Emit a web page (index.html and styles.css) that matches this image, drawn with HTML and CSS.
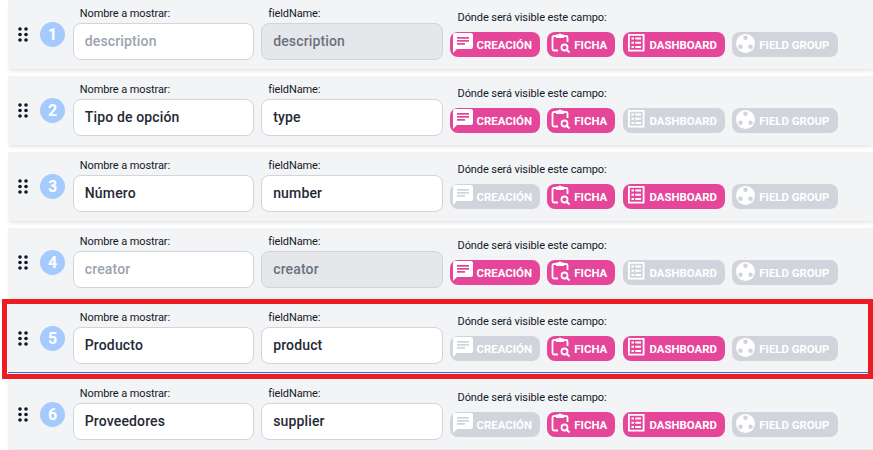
FILE: index.html
```html
<!DOCTYPE html>
<html lang="en">
<head>
  <meta charset="UTF-8">
  <title>Campos</title>
  <link rel="stylesheet" href="styles.css">
</head>
<body>
  <!-- icon sprites -->
  <svg class="sprites" width="0" height="0">
    <symbol id="i-drag" viewBox="0 0 10 15">
      <circle cx="2" cy="2" r="1.8"/><circle cx="8" cy="2" r="1.8"/>
      <circle cx="2" cy="7.5" r="1.8"/><circle cx="8" cy="7.5" r="1.8"/>
      <circle cx="2" cy="13" r="1.8"/><circle cx="8" cy="13" r="1.8"/>
    </symbol>
    <symbol id="i-chat" viewBox="0 0 24 24">
      <path fill="currentColor" d="M20 2H4a2 2 0 0 0-2 2v18l4-4h14a2 2 0 0 0 2-2V4c0-1.11-.9-2-2-2zM6 6h12v1.700H6V6zm0 3h12v1.700H6V9zm8 4.700H6V12h8v1.700z"/>
    </symbol>
    <symbol id="i-clip" viewBox="0 0 24 24">
      <path fill="none" stroke="currentColor" stroke-width="1.800" d="M8 5H6a1.500 1.500 0 0 0-1.500 1.500V18a1.500 1.500 0 0 0 1.500 1.500h4M16 5h2a1.500 1.500 0 0 1 1.500 1.500V11"/>
      <path fill="currentColor" d="M8 3.500h2.500a1.600 1.600 0 0 1 3 0H16V7H8z"/>
      <circle cx="16.500" cy="16.500" r="3" fill="none" stroke="currentColor" stroke-width="1.800"/>
      <path stroke="currentColor" stroke-width="2" d="M18.700 18.700l2.800 2.800"/>
    </symbol>
    <symbol id="i-table" viewBox="0 0 24 24">
      <path fill="currentColor" fill-rule="evenodd" d="M4 3h16.500v17.500H4zM5.800 4.800v13.900h12.900V4.800z"/>
      <path fill="currentColor" d="M7.500 6.500h2.500v2H7.500zM11.300 6.500h5.700v2h-5.700zM7.500 10.700h2.500v2H7.500zM11.300 10.700h5.700v2h-5.700zM7.500 14.900h2.500v2H7.500zM11.300 14.900h5.700v2h-5.700z"/>
    </symbol>
    <symbol id="i-group" viewBox="0 0 24 24">
      <path fill="currentColor" fill-rule="evenodd" d="M12.500 3a9.500 9.500 0 1 0 0 19 9.500 9.500 0 0 0 0-19zM12.500 4.500a2.300 2.300 0 1 1 0 4.600 2.300 2.300 0 0 1 0-4.600zM7.500 13.500a2.300 2.300 0 1 1 0 4.600 2.300 2.300 0 0 1 0-4.600zM17.500 13.500a2.300 2.300 0 1 1 0 4.600 2.300 2.300 0 0 1 0-4.600z"/>
    </symbol>
  </svg>

  <div class="list">
    <div class="row">
      <svg class="drag"><use href="#i-drag"/></svg>
      <span class="num">1</span>
      <div class="field"><label>Nombre a mostrar:</label><input type="text" placeholder="description"></div>
      <div class="field"><label>fieldName:</label><input type="text" value="description" disabled></div>
      <div class="where">
        <p>Dónde será visible este campo:</p>
        <div class="tags">
          <span class="tag on"><svg><use href="#i-chat"/></svg>Creación</span>
          <span class="tag on"><svg><use href="#i-clip"/></svg>Ficha</span>
          <span class="tag on"><svg><use href="#i-table"/></svg>Dashboard</span>
          <span class="tag"><svg><use href="#i-group"/></svg>Field group</span>
        </div>
      </div>
    </div>

    <div class="row">
      <svg class="drag"><use href="#i-drag"/></svg>
      <span class="num">2</span>
      <div class="field"><label>Nombre a mostrar:</label><input type="text" value="Tipo de opción"></div>
      <div class="field"><label>fieldName:</label><input type="text" value="type"></div>
      <div class="where">
        <p>Dónde será visible este campo:</p>
        <div class="tags">
          <span class="tag on"><svg><use href="#i-chat"/></svg>Creación</span>
          <span class="tag on"><svg><use href="#i-clip"/></svg>Ficha</span>
          <span class="tag"><svg><use href="#i-table"/></svg>Dashboard</span>
          <span class="tag"><svg><use href="#i-group"/></svg>Field group</span>
        </div>
      </div>
    </div>

    <div class="row">
      <svg class="drag"><use href="#i-drag"/></svg>
      <span class="num">3</span>
      <div class="field"><label>Nombre a mostrar:</label><input type="text" value="Número"></div>
      <div class="field"><label>fieldName:</label><input type="text" value="number"></div>
      <div class="where">
        <p>Dónde será visible este campo:</p>
        <div class="tags">
          <span class="tag"><svg><use href="#i-chat"/></svg>Creación</span>
          <span class="tag on"><svg><use href="#i-clip"/></svg>Ficha</span>
          <span class="tag on"><svg><use href="#i-table"/></svg>Dashboard</span>
          <span class="tag"><svg><use href="#i-group"/></svg>Field group</span>
        </div>
      </div>
    </div>

    <div class="row">
      <svg class="drag"><use href="#i-drag"/></svg>
      <span class="num">4</span>
      <div class="field"><label>Nombre a mostrar:</label><input type="text" placeholder="creator"></div>
      <div class="field"><label>fieldName:</label><input type="text" value="creator" disabled></div>
      <div class="where">
        <p>Dónde será visible este campo:</p>
        <div class="tags">
          <span class="tag on"><svg><use href="#i-chat"/></svg>Creación</span>
          <span class="tag on"><svg><use href="#i-clip"/></svg>Ficha</span>
          <span class="tag"><svg><use href="#i-table"/></svg>Dashboard</span>
          <span class="tag"><svg><use href="#i-group"/></svg>Field group</span>
        </div>
      </div>
    </div>

    <div class="row selected">
      <svg class="drag"><use href="#i-drag"/></svg>
      <span class="num">5</span>
      <div class="field"><label>Nombre a mostrar:</label><input type="text" value="Producto"></div>
      <div class="field"><label>fieldName:</label><input type="text" value="product"></div>
      <div class="where">
        <p>Dónde será visible este campo:</p>
        <div class="tags">
          <span class="tag"><svg><use href="#i-chat"/></svg>Creación</span>
          <span class="tag on"><svg><use href="#i-clip"/></svg>Ficha</span>
          <span class="tag on"><svg><use href="#i-table"/></svg>Dashboard</span>
          <span class="tag"><svg><use href="#i-group"/></svg>Field group</span>
        </div>
      </div>
      <div class="highlight"></div>
    </div>

    <div class="row">
      <svg class="drag"><use href="#i-drag"/></svg>
      <span class="num">6</span>
      <div class="field"><label>Nombre a mostrar:</label><input type="text" value="Proveedores"></div>
      <div class="field"><label>fieldName:</label><input type="text" value="supplier"></div>
      <div class="where">
        <p>Dónde será visible este campo:</p>
        <div class="tags">
          <span class="tag"><svg><use href="#i-chat"/></svg>Creación</span>
          <span class="tag on"><svg><use href="#i-clip"/></svg>Ficha</span>
          <span class="tag on"><svg><use href="#i-table"/></svg>Dashboard</span>
          <span class="tag"><svg><use href="#i-group"/></svg>Field group</span>
        </div>
      </div>
    </div>
  </div>
</body>
</html>
```

FILE: styles.css
```css
* {
  box-sizing: border-box;
}

html, body {
  height: 450px;
  overflow: hidden;
}

body {
  margin: 0;
  padding-left: 8px;
  background: #fff;
  font-family: Roboto, "Liberation Sans", sans-serif;
  color: #111827;
}

.sprites {
  position: absolute;
}

.list {
  display: flex;
  flex-direction: column;
  gap: 7px;
}

.row {
  position: relative;
  display: flex;
  height: 69px;
  padding: 6px 0 0 10px;
  background: #f3f4f6;
  box-shadow: 0 3px 3px -1px rgba(0, 0, 0, 0.1);
}

.row.selected {
  border-bottom: 1.5px solid #3b6fd8;
}

.highlight {
  position: absolute;
  top: -5px;
  left: -6px;
  width: 871px;
  height: 80px;
  border: 5px solid #eb1c24;
  pointer-events: none;
}

.drag {
  width: 10px;
  height: 15px;
  margin: 21px 12px 0 0;
  fill: #111827;
}

.num {
  width: 25px;
  height: 25px;
  margin: 16px 7.8px 0 0;
  border-radius: 50%;
  background: #a4cafe;
  color: #fff;
  font-size: 16px;
  font-weight: 700;
  line-height: 25px;
  text-align: center;
}

.field {
  display: flex;
  flex-direction: column;
  width: 181.4px;
  margin-right: 7px;
}

.field label {
  height: 17px;
  padding-left: 7px;
  font-size: 11px;
  line-height: 16px;
  letter-spacing: -0.1px;
}

.field input {
  width: 100%;
  height: 37px;
  padding: 0 11px 1px;
  border: 1px solid #d1d5db;
  border-radius: 8px;
  background: #fff;
  color: #1f2937;
  font-family: inherit;
  font-size: 14px;
  font-weight: 500;
  letter-spacing: 0.01em;
}

.field input::placeholder {
  color: #9ca3af;
}

.field input:disabled {
  background: #e5e7eb;
  color: #6b7280;
}

.where p {
  margin: 4px 0 0;
  padding-left: 8px;
  height: 17px;
  font-size: 11px;
  line-height: 15px;
  letter-spacing: -0.1px;
}

.tags {
  display: flex;
  gap: 7.2px;
  margin-top: 5px;
}

.tag {
  display: flex;
  align-items: center;
  gap: 2px;
  height: 25px;
  padding: 0 8.2px 0 1px;
  border-radius: 8px;
  background: #d1d5db;
  color: #fff;
  font-size: 11.4px;
  font-weight: 700;
  text-transform: uppercase;
}

.tag.on {
  background: #e5469a;
}

.tag svg {
  width: 24px;
  height: 24px;
  margin-top: -3px;
  flex-shrink: 0;
}
```
